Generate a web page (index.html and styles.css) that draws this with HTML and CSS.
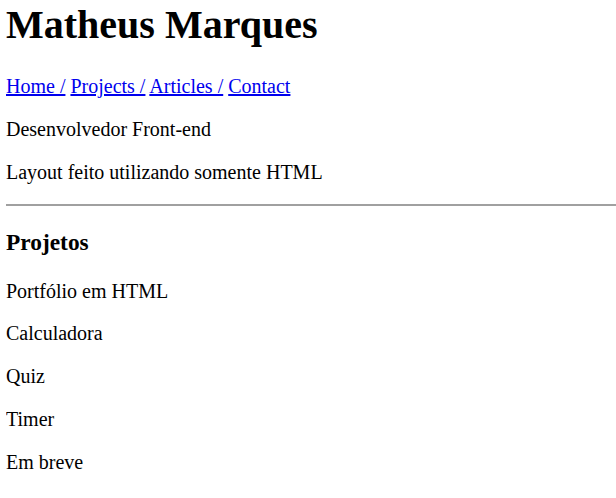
FILE: index.html
```html
<!DOCTYPE html>
<html lang="pt-BR">
<head>
<meta charset="utf-8">
<title>Matheus Marques</title>
<link rel="stylesheet" href="styles.css">
</head>
<body>
<header class="header">
  <h1 class="title">Matheus Marques</h1>
  <nav class="nav"><a href="#">Home /</a> <a href="#">Projects /</a> <a href="#">Articles /</a> <a href="#">Contact</a></nav>
  <p class="text">Desenvolvedor Front-end</p>
  <p class="text">Layout feito utilizando somente HTML</p>
</header>
<hr class="rule">
<section class="projects">
  <h3 class="subtitle">Projetos</h3>
  <p class="text">Portfólio em HTML</p>
  <p class="text">Calculadora</p>
  <p class="text">Quiz</p>
  <p class="text">Timer</p>
  <p class="text">Em breve</p>
</section>
</body>
</html>
```
FILE: styles.css
```css
html, body {
  background: #fff;
}
body {
  margin: 0 0 0 6px;
  padding-top: 1px;
  font-family: "Liberation Serif", "Times New Roman", serif;
  font-size: 20px;
  color: #000;
}
.title {
  font-size: 40px;
  font-weight: bold;
  margin: 0 0 27px;
}
.nav {
  margin: 20px 0;
}
.nav a {
  color: #0000ee;
  text-decoration: underline;
}
.text {
  margin: 19.75px 0;
}
.rule {
  margin: 20px 0;
  height: 0;
  border: 0;
  border-top: 2px solid #a0a0a0;
}
.subtitle {
  font-size: 23.4px;
  font-weight: bold;
  margin: 23.4px 0;
}
```
